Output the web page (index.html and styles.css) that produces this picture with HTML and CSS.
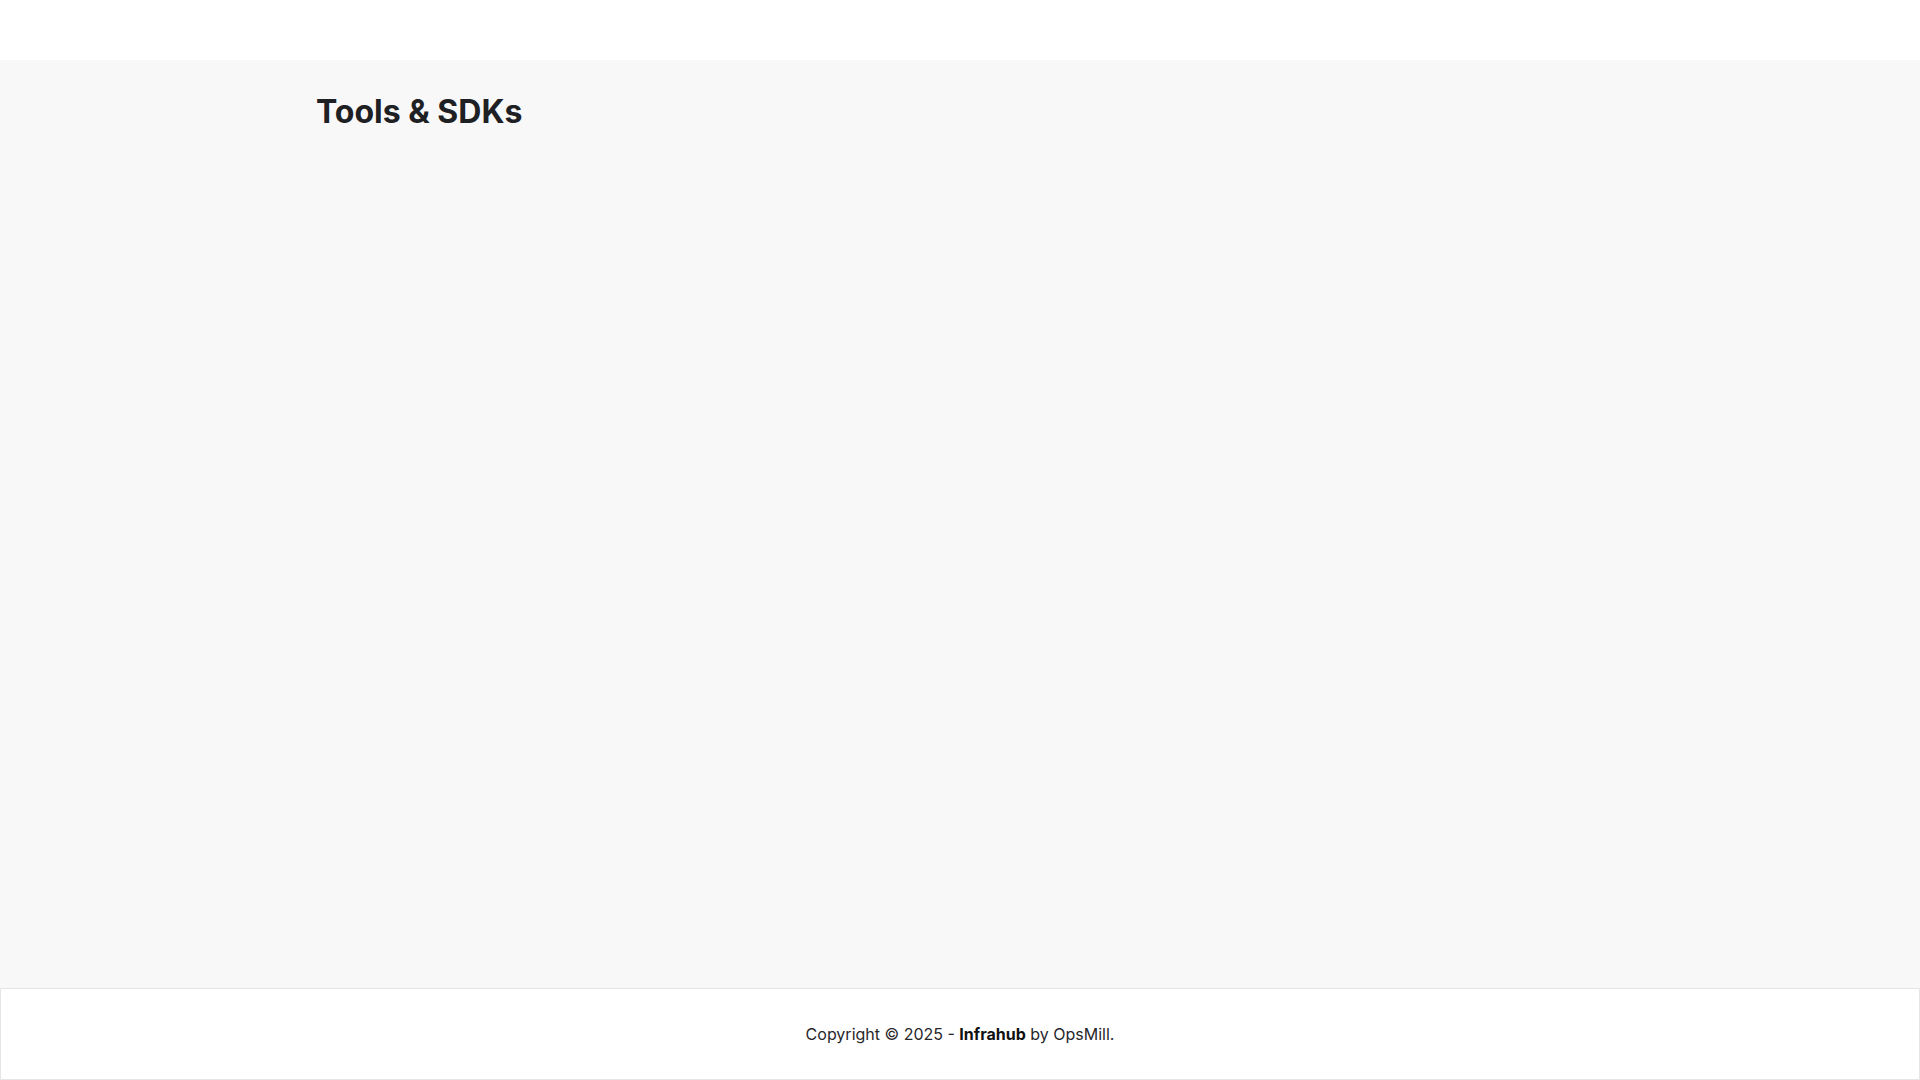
FILE: index.html
```html
<!DOCTYPE html>
<html lang="en">
<head>
<meta charset="utf-8">
<title>Tools &amp; SDKs</title>
<link rel="stylesheet" href="styles.css">
</head>
<body>
<div class="app">
  <header class="topbar"></header>
  <main class="main">
    <div class="container">
      <h1 class="title">Tools &amp; SDKs</h1>
    </div>
  </main>
  <footer class="footer">
    <p class="copy">Copyright © 2025 - <strong>Infrahub</strong> by OpsMill.</p>
  </footer>
</div>
</body>
</html>
```
FILE: styles.css
```css
* { box-sizing: border-box; }
html, body { margin: 0; padding: 0; height: 100%; }
body {
  font-family: Inter, "Noto Sans", sans-serif;
  color: #1f2023;
  background: #ffffff;
}
.app {
  display: flex;
  flex-direction: column;
  min-height: 100vh;
}
.topbar {
  height: 60px;
  background: #ffffff;
  flex: none;
}
.main {
  flex: 1;
  background: #f8f8f8;
}
.container {
  padding: 32px 316px;
}
.title {
  margin: 0;
  font-size: 32px;
  line-height: 40px;
  font-weight: 700;
  color: #1f2023;
}
.footer {
  flex: none;
  height: 92px;
  border: 1px solid #e5e5e5;
  background: #ffffff;
  display: flex;
  align-items: center;
  justify-content: center;
}
.copy {
  margin: 0;
  font-size: 16px;
  color: #27272a;
}
.copy strong { font-weight: 700; color: #111111; }
```
